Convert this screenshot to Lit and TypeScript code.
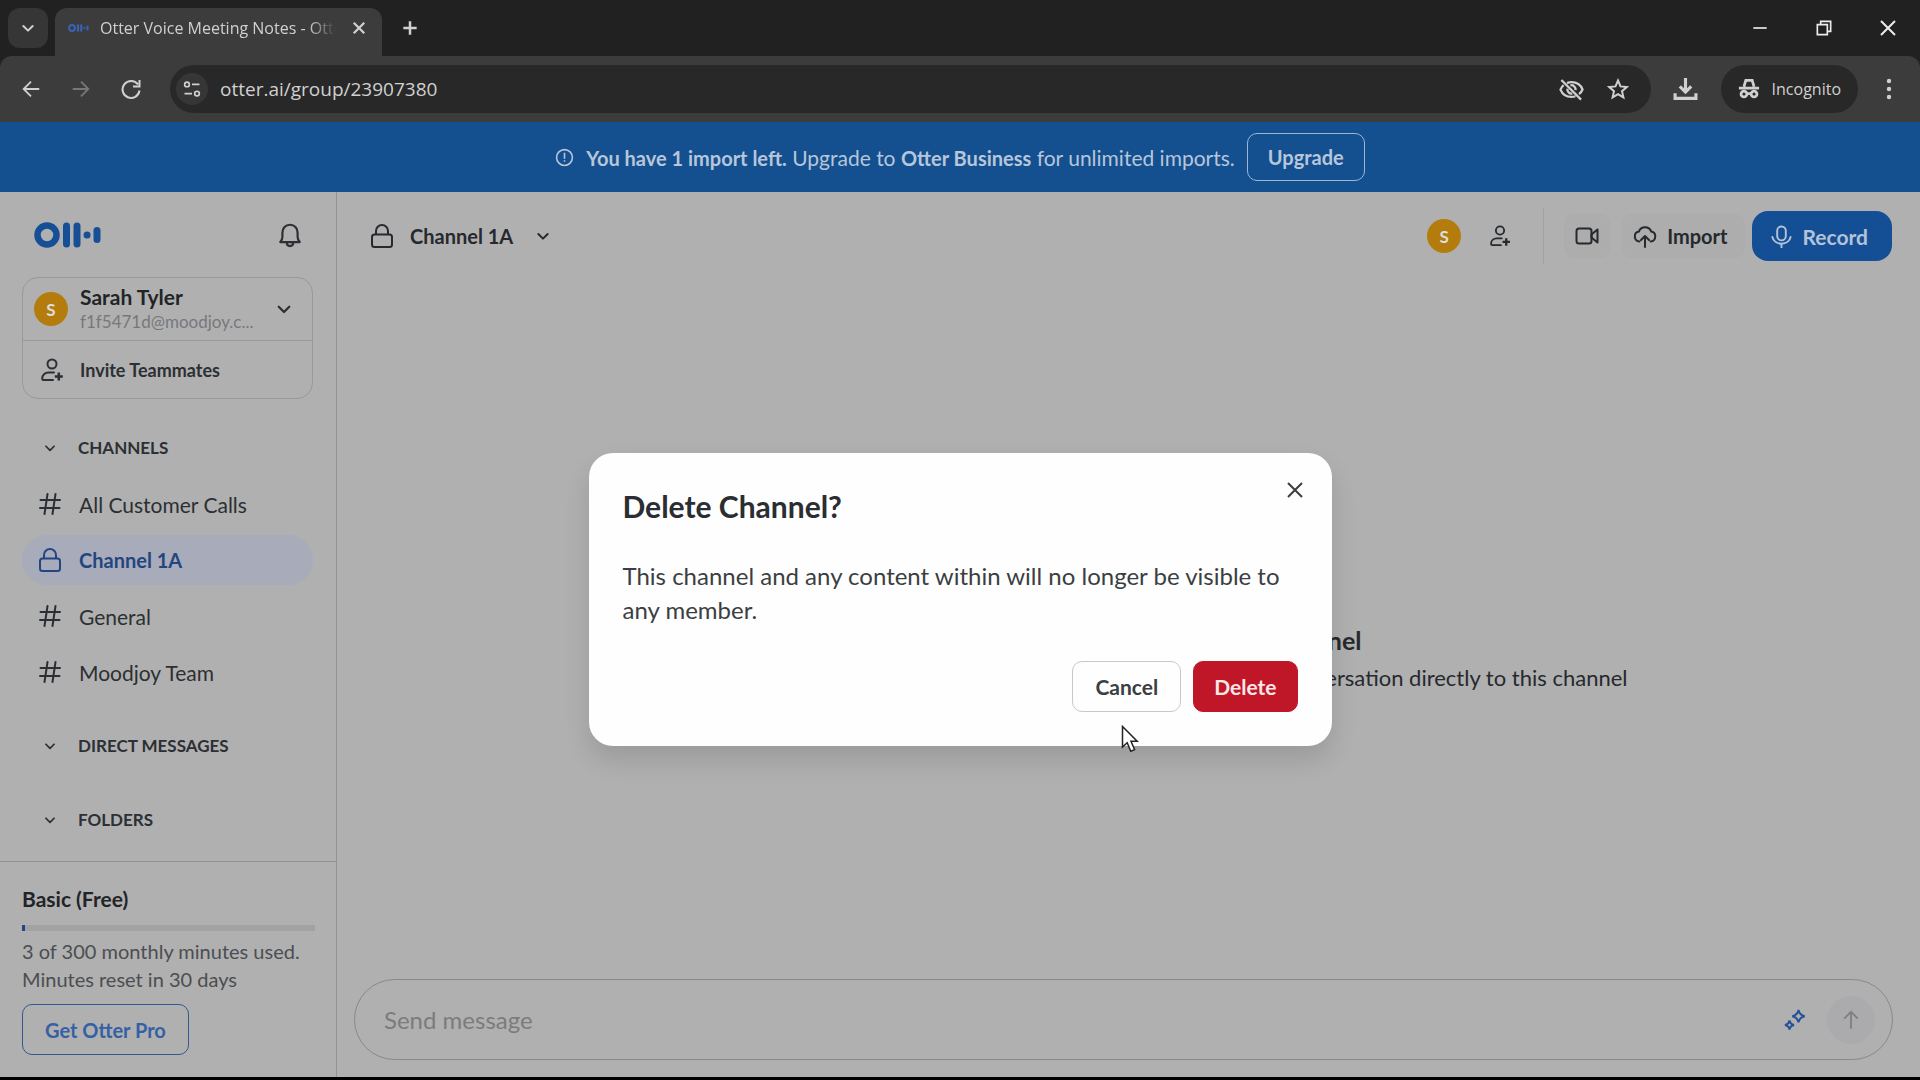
import { LitElement, html, svg, css, type TemplateResult } from "lit";
import { customElement, property } from "lit/decorators.js";
import { classMap } from "lit/directives/class-map.js";

/** Wraps the strokes of an icon in a 24-unit box that is drawn at the given size. */
const icon = (shape: TemplateResult, size = 24, weight = 2) => html`
  <svg
    width=${size}
    height=${size}
    viewBox="0 0 24 24"
    fill="none"
    stroke="currentColor"
    stroke-width=${weight}
    aria-hidden="true"
  >
    ${shape}
  </svg>
`;

const shapes = {
  chevron: svg`<path d="M5 9l7 7 7-7" stroke-linecap="round" stroke-linejoin="round"/>`,
  close: svg`<path d="M5 5l14 14M19 5L5 19"/>`,
  plus: svg`<path d="M12 4v16M4 12h16"/>`,
  minimize: svg`<path d="M4 12h16"/>`,
  restore: svg`<path d="M4 8h12v12H4zM8 8V4h12v12h-4"/>`,
  back: svg`<path d="M21 12H4M12 4l-8 8 8 8"/>`,
  forward: svg`<path d="M3 12h17M12 4l8 8-8 8"/>`,
  reload: svg`<path d="M19 7.500A8.500 8.500 0 1 0 20.500 13.500M20.500 3v6.500H14"/>`,
  tune: svg`<circle cx="6" cy="6.500" r="2.800"/><path d="M12 6.500h9M3 17.500h9"/><circle cx="18" cy="17.500" r="2.800"/>`,
  eyeOff: svg`<path d="M3 3.500l17.500 17.500M8 6.300C9.200 5.800 10.500 5.500 12 5.500c4.600 0 8.300 2.700 9.800 6.500-.7 1.700-1.700 3.100-3.100 4.200M15.500 18c-1.100.4-2.300.6-3.500.6-4.600 0-8.300-2.700-9.800-6.500.6-1.500 1.500-2.800 2.800-3.900"/><path d="M11 8.300c2.600-.6 4.900 1.600 4.600 4.300M8.400 11.300c-.4 2.600 1.700 4.700 4.300 4.300"/>`,
  star: svg`<path d="M12 3.500l2.500 5.900 6.300.6-4.800 4.200 1.400 6.200-5.400-3.300-5.400 3.300L8 14.200 3.200 10l6.300-.6z"/>`,
  download: svg`<path d="M12 1v13M6.500 9l5.500 5.500L17.500 9M2 15.500V20.500h20v-5"/>`,
  kebab: svg`<g fill="currentColor" stroke="none"><circle cx="12" cy="4" r="2.200"/><circle cx="12" cy="12" r="2.200"/><circle cx="12" cy="20" r="2.200"/></g>`,
  incognito: svg`<path d="M6.500 9.500L8.500 2.500h7l2 7M1 11h22"/><circle cx="6.500" cy="17.500" r="3.200"/><circle cx="17.500" cy="17.500" r="3.200"/><path d="M9.500 17h5"/>`,
  alert: svg`<circle cx="12" cy="12" r="10"/><path d="M12 6v7.500M12 15.500v2"/>`,
  bell: svg`<path d="M3 18.500h18c-1.400-1.500-2-3-2-5V10c0-4.200-2.800-7.500-7-7.500S5 5.800 5 10v3.500c0 2-.6 3.500-2 5zM9 19c0 2 1.200 3.200 3 3.200s3-1.200 3-3.200" stroke-linejoin="round"/>`,
  addPerson: svg`<circle cx="12" cy="6" r="4.500"/><path d="M14 14.500H8.500C5 14.500 2.200 17 2.200 20.500c0 .8.500 1.500 1.500 1.500H13" stroke-linecap="round"/><path d="M18.800 14.500v8M14.800 18.500h8" stroke-width="2.500"/>`,
  hash: svg`<path d="M9.500 2L6.500 22M17.500 2l-3 20M2.500 8H22M2 16h19.500" stroke-linecap="round"/>`,
  lock: svg`<rect x="2" y="10.500" width="20" height="12.500" rx="2.500"/><path d="M6 10.500V7a6 6 0 0 1 12 0v3.500"/>`,
  video: svg`<rect x="1.500" y="4.500" width="15" height="15" rx="2.500"/><path d="M16.500 10.500L22.500 5.500v13l-6-5z" stroke-linejoin="round"/>`,
  cloud: svg`<path d="M6.500 17.500a5 5 0 0 1-.6-9.900 6.500 6.500 0 0 1 12.300 0 5 5 0 0 1-.6 9.900M12 23V12.500M8 16l4-4 4 4" stroke-linecap="round" stroke-linejoin="round"/>`,
  mic: svg`<rect x="7.500" y="1.500" width="9" height="14.500" rx="4.500"/><path d="M2.500 12.500c.8 4.200 4.700 7 9.500 7s8.700-2.800 9.500-7M12 19.500V23.500" stroke-linecap="round"/>`,
  sparkles: svg`<path d="M15.500 2c.8 3.900 2.300 5.400 6.200 6.200-3.900.8-5.400 2.300-6.200 6.200-.8-3.900-2.300-5.400-6.200-6.200 3.900-.8 5.400-2.300 6.200-6.200zM6.500 12.500c.5 2.700 1.700 3.900 4.500 4.500-2.800.6-4 1.800-4.500 4.500C6 18.800 4.800 17.600 2 17c2.800-.6 4-1.800 4.500-4.500z"/>`,
  send: svg`<path d="M12 21.500V3M4.500 10.500L12 3l7.500 7.500"/>`,
};

const logo = (width: number, height: number) => html`
  <svg width=${width} height=${height} viewBox="0 0 68 26" aria-hidden="true">
    <circle cx="13" cy="13" r="9.500" fill="none" stroke="currentColor" stroke-width="6.500" />
    <g stroke="currentColor" stroke-width="7" stroke-linecap="round">
      <path d="M32.500 4v18" />
      <path d="M43 4v18" />
      <path d="M53 13h.1" />
      <path d="M63 8.500v9" />
    </g>
  </svg>
`;

const resets = css`
  * {
    box-sizing: border-box;
  }
  button,
  input {
    margin: 0;
    padding: 0;
    border: 0;
    background: none;
    color: inherit;
    font: inherit;
  }
  button,
  a {
    display: flex;
    align-items: center;
    justify-content: center;
    white-space: nowrap;
    text-decoration: none;
    color: inherit;
  }
  svg {
    display: block;
    flex: none;
  }
`;

@customElement("browser-chrome")
export class BrowserChrome extends LitElement {
  static styles = [
    resets,
    css`
      :host {
        display: block;
        background: #212121;
        color: #d0d0d0;
        font-family: "Open Sans", "Noto Sans", sans-serif;
        font-size: 16px;
      }
      .strip {
        display: flex;
        height: 56px;
        padding-left: 8px;
      }
      .search-tabs {
        width: 40px;
        height: 40px;
        margin: 8px 7px 0 0;
        border-radius: 12px;
        background: #363636;
      }
      .tab {
        display: flex;
        align-items: center;
        width: 327px;
        height: 48px;
        margin-top: 8px;
        padding: 0 14px 8px 13px;
        border-radius: 12px 12px 0 0;
        background: #3c3c3c;
      }
      .favicon {
        display: flex;
        margin-right: 11px;
        color: #3a62b4;
      }
      .tab-title {
        flex: 1;
        overflow: hidden;
        white-space: nowrap;
        mask-image: linear-gradient(to right, #000 208px, transparent 236px);
      }
      .new-tab {
        width: 56px;
      }
      .windows {
        display: flex;
        margin-left: auto;
      }
      .windows button {
        width: 64px;
        color: #ececec;
      }
      .toolbar {
        display: flex;
        align-items: center;
        height: 66px;
        padding-left: 6px;
        border-radius: 12px 12px 0 0;
        background: #3c3c3c;
      }
      .nav {
        width: 50px;
        height: 48px;
      }
      .nav:disabled {
        color: #777777;
      }
      .address {
        display: flex;
        align-items: center;
        flex: 1;
        height: 48px;
        margin-left: 14px;
        padding: 0 10px 0 6px;
        border-radius: 24px;
        background: #282828;
      }
      .site {
        width: 32px;
        height: 32px;
        margin-right: 12px;
        border-radius: 16px;
        background: #363636;
      }
      .url {
        flex: 1;
        min-width: 0;
        font-size: 19px;
      }
      .address button:not(.site) {
        width: 46px;
      }
      .download {
        width: 70px;
      }
      .incognito {
        gap: 12px;
        height: 48px;
        padding: 0 17px;
        border-radius: 24px;
        background: #282828;
      }
      .more {
        width: 62px;
      }
    `,
  ];

  render() {
    return html`
      <div class="strip">
        <button class="search-tabs" aria-label="Search tabs">${icon(shapes.chevron, 16, 3)}</button>
        <div class="tab">
          <span class="favicon">${logo(21, 8)}</span>
          <span class="tab-title">Otter Voice Meeting Notes - Otter</span>
          <button aria-label="Close tab">${icon(shapes.close, 18, 3)}</button>
        </div>
        <button class="new-tab" aria-label="New tab">${icon(shapes.plus, 20, 3)}</button>
        <div class="windows">
          <button aria-label="Minimize">${icon(shapes.minimize, 20, 2)}</button>
          <button aria-label="Restore">${icon(shapes.restore, 20, 2)}</button>
          <button aria-label="Close window">${icon(shapes.close, 24, 2)}</button>
        </div>
      </div>
      <div class="toolbar">
        <button class="nav" aria-label="Back">${icon(shapes.back, 22, 2)}</button>
        <button class="nav" aria-label="Forward" disabled>${icon(shapes.forward, 22, 2)}</button>
        <button class="nav" aria-label="Reload">${icon(shapes.reload, 24, 2)}</button>
        <div class="address">
          <button class="site" aria-label="Site information">${icon(shapes.tune, 20, 2)}</button>
          <input class="url" aria-label="Address" value="otter.ai/group/23907380" />
          <button aria-label="Tracking protection">${icon(shapes.eyeOff, 27, 2)}</button>
          <button aria-label="Bookmark">${icon(shapes.star, 24, 2)}</button>
        </div>
        <button class="download" aria-label="Downloads">${icon(shapes.download, 25, 3)}</button>
        <button class="incognito">${icon(shapes.incognito, 22, 3)}Incognito</button>
        <button class="more" aria-label="Menu">${icon(shapes.kebab, 24, 2)}</button>
      </div>
    `;
  }
}

interface Channel {
  name: string;
  locked?: boolean;
}

@customElement("side-bar")
export class SideBar extends LitElement {
  @property({ attribute: false }) channels: Channel[] = [];
  @property() selected = "";
  @property({ type: Number }) used = 0;
  @property({ type: Number }) total = 1;

  static styles = [
    resets,
    css`
      :host {
        display: flex;
        flex-direction: column;
        width: 337px;
        border-right: 1px solid #929394;
        color: #2c2f33;
      }
      .top {
        display: flex;
        align-items: center;
        justify-content: space-between;
        padding: 30px 33px 29px 34px;
      }
      .logo {
        color: #174f96;
      }
      .card {
        margin: 0 23px 0 22px;
        border: 1px solid #98999a;
        border-radius: 16px;
      }
      .account {
        display: grid;
        grid-template-columns: 34px 1fr 18px;
        align-items: center;
        gap: 12px;
        width: 100%;
        height: 63px;
        padding: 0 19px 0 11px;
        border-bottom: 1px solid #98999a;
        text-align: left;
      }
      .avatar {
        display: grid;
        place-items: center;
        width: 34px;
        height: 34px;
        border-radius: 17px;
        background: #b47c0c;
        color: #dddddd;
        font-size: 17px;
        font-weight: 700;
      }
      .who {
        display: grid;
        min-width: 0;
      }
      .name {
        line-height: 26px;
        font-size: 21px;
        font-weight: 700;
        color: #222428;
      }
      .email {
        overflow: hidden;
        text-overflow: ellipsis;
        line-height: 24px;
        font-size: 17px;
        color: #76787c;
      }
      .invite {
        justify-content: flex-start;
        gap: 16px;
        width: 100%;
        height: 57px;
        padding-left: 17px;
        font-size: 18px;
        font-weight: 700;
      }
      .lists {
        flex: 1;
        padding: 20px 23px 0 22px;
      }
      .heading {
        justify-content: flex-start;
        gap: 19px;
        height: 57px;
        padding-left: 19px;
        margin-bottom: 17px;
        font-size: 17px;
        font-weight: 700;
      }
      .heading.open {
        margin-bottom: 3px;
      }
      .heading:last-child {
        margin-bottom: 0;
      }
      .heading svg {
        margin: 0 2px;
      }
      .channels {
        margin: 0 0 20px;
        padding: 0;
        list-style: none;
      }
      .channel {
        justify-content: flex-start;
        gap: 17px;
        height: 50px;
        margin-bottom: 6px;
        padding-left: 16px;
        border-radius: 25px;
        font-size: 21px;
      }
      .channel.on {
        background: #a7abba;
        color: #234680;
        font-size: 20px;
        font-weight: 700;
      }
      .plan {
        display: grid;
        justify-items: start;
        padding: 22px 21px 22px 22px;
        border-top: 1px solid #929394;
        font-size: 20px;
        line-height: 28px;
        color: #4b4e52;
      }
      .plan-name {
        margin: 0 0 11px;
        line-height: 30px;
        font-size: 21px;
        font-weight: 700;
        color: #222428;
      }
      .bar {
        width: 100%;
        height: 6px;
        margin-bottom: 6px;
        background: #a1a2a3;
      }
      .fill {
        height: 6px;
        background: #234680;
      }
      .upgrade {
        height: 51px;
        margin-top: 11px;
        padding: 0 22px;
        border: 1px solid #30598f;
        border-radius: 10px;
        font-size: 20px;
        font-weight: 700;
        color: #3560a4;
      }
    `,
  ];

  render() {
    return html`
      <div class="top">
        <span class="logo">${logo(68, 26)}</span>
        <button aria-label="Notifications">${icon(shapes.bell, 26, 2)}</button>
      </div>
      <div class="card">
        <button class="account">
          <span class="avatar">S</span>
          <span class="who">
            <span class="name">Sarah Tyler</span>
            <span class="email">f1f5471d@moodjoy.c...</span>
          </span>
          ${icon(shapes.chevron, 18, 3)}
        </button>
        <button class="invite">${icon(shapes.addPerson, 24, 2)}Invite Teammates</button>
      </div>
      <nav class="lists">
        <button class="heading open">${icon(shapes.chevron, 14, 3)}CHANNELS</button>
        <ul class="channels">
          ${this.channels.map(
            (c) => html`
              <li>
                <a href="#" class=${classMap({ channel: true, on: c.name === this.selected })}>
                  ${icon(c.locked ? shapes.lock : shapes.hash, 24, 2)}${c.name}
                </a>
              </li>
            `,
          )}
        </ul>
        <button class="heading">${icon(shapes.chevron, 14, 3)}DIRECT MESSAGES</button>
        <button class="heading">${icon(shapes.chevron, 14, 3)}FOLDERS</button>
      </nav>
      <section class="plan">
        <h2 class="plan-name">Basic (Free)</h2>
        <div class="bar" role="progressbar" aria-valuenow=${this.used} aria-valuemax=${this.total}>
          <div class="fill" style="width:${(this.used / this.total) * 100}%"></div>
        </div>
        <span>${this.used} of ${this.total} monthly minutes used.</span>
        <span>Minutes reset in 30 days</span>
        <button class="upgrade">Get Otter Pro</button>
      </section>
    `;
  }
}

@customElement("channel-view")
export class ChannelView extends LitElement {
  @property() name = "";

  static styles = [
    resets,
    css`
      :host {
        display: flex;
        flex-direction: column;
        flex: 1;
        min-width: 0;
        color: #26292d;
      }
      .head {
        display: flex;
        align-items: center;
        height: 88px;
        padding: 0 28px 0 33px;
        font-size: 20px;
        font-weight: 700;
      }
      .title {
        gap: 16px;
      }
      .title svg:last-child {
        margin-left: 6px;
      }
      .actions {
        display: flex;
        align-items: center;
        margin-left: auto;
      }
      .avatar {
        width: 34px;
        height: 34px;
        margin-right: 28px;
        border-radius: 17px;
        background: #b47c0c;
        color: #dddddd;
        font-size: 17px;
      }
      .divider {
        width: 1px;
        height: 56px;
        margin: 0 20px 0 32px;
        background: #a2a2a3;
      }
      .soft {
        gap: 10px;
        height: 44px;
        padding: 0 11px;
        border-radius: 10px;
        background: #adadae;
      }
      .soft + .soft {
        margin: 0 7px 0 12px;
        padding-right: 17px;
      }
      .record {
        gap: 10px;
        height: 50px;
        padding: 0 24px 0 18px;
        border-radius: 16px;
        background: #144f96;
        font-size: 21px;
        color: #b4c2d8;
      }
      .empty {
        display: flex;
        flex-direction: column;
        align-items: center;
        justify-content: center;
        flex: 1;
        padding-top: 57px;
      }
      .empty h2,
      .empty p {
        max-width: 100%;
        margin: 0;
        text-align: right;
      }
      .empty h2 {
        width: 466px;
        margin-bottom: 2px;
        line-height: 38px;
        font-size: 25px;
      }
      .empty p {
        width: 998px;
        line-height: 34px;
        font-size: 22px;
      }
      .composer {
        display: flex;
        align-items: center;
        height: 81px;
        margin: 0 27px 17px 17px;
        padding: 0 17px 0 29px;
        border: 1px solid #88898a;
        border-radius: 41px;
      }
      .message {
        flex: 1;
        min-width: 0;
        font-size: 24px;
      }
      .message::placeholder {
        color: #7b7c7d;
        opacity: 1;
      }
      .assist {
        width: 56px;
        color: #27509a;
      }
      .send {
        width: 48px;
        height: 48px;
        margin-left: 4px;
        border-radius: 24px;
        background: #ababad;
        color: #7f8082;
      }
    `,
  ];

  render() {
    return html`
      <header class="head">
        <button class="title">
          ${icon(shapes.lock, 24, 2)}${this.name}${icon(shapes.chevron, 16, 3)}
        </button>
        <div class="actions">
          <button class="avatar">S</button>
          <button aria-label="Add people">${icon(shapes.addPerson, 22, 2)}</button>
          <span class="divider"></span>
          <button class="soft" aria-label="Join meeting">${icon(shapes.video, 24, 2)}</button>
          <button class="soft">${icon(shapes.cloud, 24, 2)}Import</button>
          <button class="record">${icon(shapes.mic, 23, 2)}Record</button>
        </div>
      </header>
      <section class="empty">
        <h2>channel</h2>
        <p>conversation directly to this channel</p>
      </section>
      <form class="composer">
        <input class="message" placeholder="Send message" aria-label="Send message" />
        <button type="button" class="assist" aria-label="Suggestions">
          ${icon(shapes.sparkles, 24, 2)}
        </button>
        <button type="button" class="send" aria-label="Send">${icon(shapes.send, 22, 2)}</button>
      </form>
    `;
  }
}

@customElement("confirm-dialog")
export class ConfirmDialog extends LitElement {
  static styles = [
    resets,
    css`
      :host {
        display: block;
        width: 743px;
        max-width: 90%;
        padding: 34px;
        border-radius: 24px;
        background: #fefefe;
        box-shadow: 0 14px 26px rgba(0, 0, 0, 0.12);
        color: #3b3e42;
      }
      .row {
        display: flex;
        justify-content: space-between;
        align-items: flex-start;
        margin-bottom: 34px;
      }
      h1 {
        margin: 0;
        line-height: 38px;
        font-size: 30px;
        font-weight: 700;
        color: #2a2d31;
      }
      .close {
        width: 22px;
        height: 22px;
        margin-right: -8px;
        margin-top: -8px;
      }
      p {
        margin: 0 0 34px;
        line-height: 34px;
        font-size: 24px;
      }
      .buttons {
        display: flex;
        justify-content: flex-end;
        gap: 12px;
        font-size: 21px;
        font-weight: 700;
      }
      .buttons button {
        height: 51px;
        padding: 0 22px;
        border: 1px solid #c8c8ca;
        border-radius: 10px;
      }
      .buttons .danger {
        padding: 0 20px;
        border-color: #bf1727;
        background: #bf1727;
        color: #fbe6e8;
      }
    `,
  ];

  render() {
    return html`
      <div class="row">
        <h1>Delete Channel?</h1>
        <button class="close" aria-label="Close">${icon(shapes.close, 24, 2)}</button>
      </div>
      <p>This channel and any content within will no longer be visible to any member.</p>
      <div class="buttons">
        <button>Cancel</button>
        <button class="danger">Delete</button>
      </div>
    `;
  }
}

@customElement("app-root")
export class AppRoot extends LitElement {
  static styles = [
    resets,
    css`
      :host {
        display: flex;
        flex-direction: column;
        min-height: 100vh;
        border-bottom: 3px solid #000000;
        box-sizing: border-box;
        background: #b0b0b0;
        font-family: Lato, "Liberation Sans", sans-serif;
      }
      .page {
        position: relative;
        display: flex;
        flex-direction: column;
        flex: 1;
      }
      .banner {
        display: flex;
        align-items: center;
        justify-content: center;
        height: 70px;
        background: #14508f;
        color: #b7c6da;
        font-size: 21px;
      }
      .banner p {
        margin: 0 12px;
      }
      .banner b,
      .upgrade {
        font-size: 20px;
        font-weight: 700;
      }
      .upgrade {
        height: 48px;
        padding: 0 20px;
        border: 1px solid #9cb6d6;
        border-radius: 10px;
      }
      .body {
        display: flex;
        flex: 1;
      }
      .overlay {
        position: absolute;
        inset: 0;
        display: flex;
        align-items: center;
        justify-content: center;
      }
      .pointer {
        position: absolute;
        left: calc(50% + 161px);
        top: calc(50% + 125px);
      }
    `,
  ];

  private channels: Channel[] = [
    { name: "All Customer Calls" },
    { name: "Channel 1A", locked: true },
    { name: "General" },
    { name: "Moodjoy Team" },
  ];

  render() {
    return html`
      <browser-chrome></browser-chrome>
      <div class="page">
        <div class="banner">
          ${icon(shapes.alert, 19, 2)}
          <p>
            <b>You have 1 import left.</b> Upgrade to <b>Otter Business</b> for unlimited imports.
          </p>
          <button class="upgrade">Upgrade</button>
        </div>
        <div class="body">
          <side-bar .channels=${this.channels} selected="Channel 1A" used="3" total="300"></side-bar>
          <channel-view name="Channel 1A"></channel-view>
        </div>
        <div class="overlay">
          <confirm-dialog role="dialog" aria-modal="true"></confirm-dialog>
          <svg class="pointer" width="18" height="28" viewBox="0 0 18 28" aria-hidden="true">
            <path
              d="M1.500 1.500v20.500l4.700-4.200 3.600 8.400 3.800-1.600-3.600-8.300h6.200z"
              fill="#fff"
              stroke="#222"
              stroke-width="1.500"
            />
          </svg>
        </div>
      </div>
    `;
  }
}
